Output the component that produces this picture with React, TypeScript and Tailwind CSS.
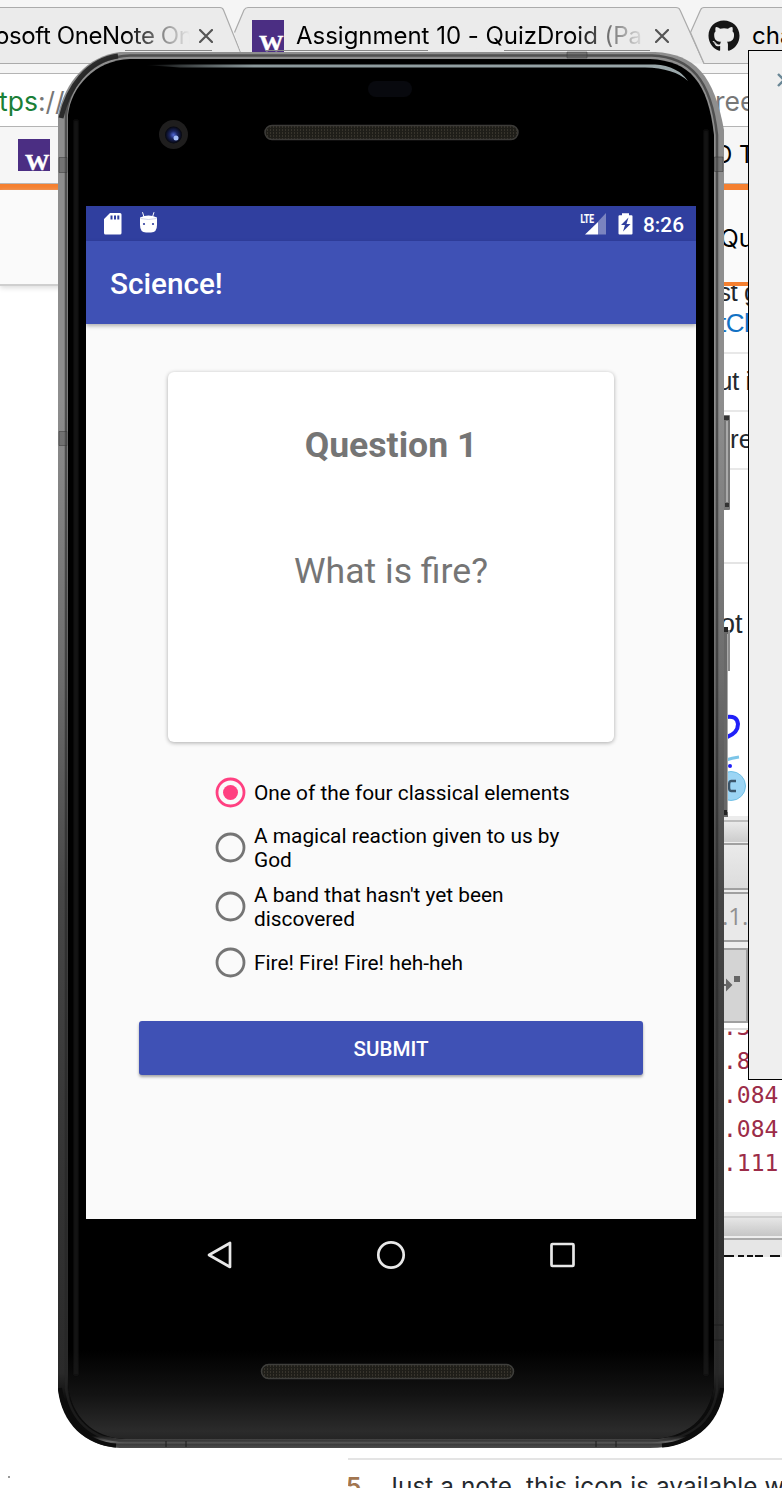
import React from "react";
import { FaGithub } from "react-icons/fa";

function Favicon() {
  return (
    <svg width="32" height="32" viewBox="0 0 32 32" className="shrink-0">
      <rect width="32" height="32" fill="#4b2e83" />
      <text x="7" y="31" fill="#fff" stroke="#fff" strokeWidth="0.4" fontFamily="Liberation Serif, serif" fontWeight="700" fontSize="24" textLength="24.5" lengthAdjust="spacingAndGlyphs">W</text>
    </svg>
  );
}

function Close() {
  return (
    <svg width="14" height="14" viewBox="0 0 14 14" className="shrink-0">
      <path d="M1 1L13 13M13 1L1 13" stroke="#555" strokeWidth="2.2" strokeLinecap="round" />
    </svg>
  );
}

function TabStrip() {
  return (
    <div className="relative h-[64px] bg-[#f5f5f5]">
      <svg className="absolute inset-0" width="782" height="64" viewBox="0 0 782 64" fill="#ebebeb" stroke="#ababab" strokeWidth="1.2">
        <path d="M-5 63.5V7.500H220Q222.500 7.500 223.500 10L245 63.500Z" />
        <path d="M245 63.500L234 32.500L244 10Q245.500 7.500 248 7.500H676Q679 7.500 680 10L704 63.500Z" stroke="none" />
        <path d="M234.500 32.500L244 10Q245.500 7.500 248 7.500H676Q679 7.500 680 10L704 63.500" />
        <path d="M790 63.500V7.500H704Q701.500 7.500 700.500 10L690.500 32.500L704 63.500Z" />
      </svg>
      <div className="relative flex h-[64px] items-center pt-[8px]">
        <div className="w-[190px] shrink-0 overflow-hidden whitespace-nowrap text-[24px] tracking-[-0.4px] [mask-image:linear-gradient(to_right,black_66%,transparent_100%)]">
          <span className="ml-[-5px]">osoft OneNote On</span>
        </div>
        <div className="ml-[9px]"><Close /></div>
        <div className="ml-[39px]"><Favicon /></div>
        <div className="ml-[12px] w-[347px] shrink-0 overflow-hidden whitespace-nowrap text-[24px] tracking-[-0.02px] [mask-image:linear-gradient(to_right,black_80%,transparent_101%)]">Assignment 10 - QuizDroid (Pa</div>
        <div className="ml-[12px]"><Close /></div>
        <FaGithub className="ml-[39px] shrink-0" size={32} color="#161616" />
        <div className="ml-[12px] whitespace-nowrap text-[24px]">cha</div>
      </div>
    </div>
  );
}

function Log({ children }: { children: string }) {
  return <div className="h-[34px] pl-[3px] font-['DejaVu_Sans_Mono',monospace] text-[23px] leading-[34px] text-[#9c2c48]">{children}</div>;
}

function SideColumn() {
  return (
    <div className="w-[62px] shrink-0 overflow-hidden text-[24.5px] text-[#24292e]">
      <div className="flex h-[92px] items-center bg-[#fafafa] pt-[5px] text-black">Qu</div>
      <div className="h-[4px] bg-[#f58030]" />
      <div className="h-[68px] overflow-hidden border-b-2 border-[#e8e8e8] font-['Liberation_Sans',sans-serif] text-[26px] tracking-[-0.5px] whitespace-nowrap">
        <div className="mt-[-9px] ml-[-2px] h-[31px] leading-[31px]">st g</div>
        <div className="ml-[-1px] h-[31px] leading-[31px] text-[#1372c4]">tCl</div>
      </div>
      <div className="h-[58px] border-b-2 border-[#e8e8e8] font-['Liberation_Sans',sans-serif] text-[26px] leading-[55px] tracking-[-0.5px]"><span className="ml-[-2px]">ut i</span></div>
      <div className="h-[58px] border-b-2 border-[#e8e8e8] pl-[10px] font-['Liberation_Sans',sans-serif] text-[26px] leading-[55px]">ree</div>
      <div className="h-[94px] border-b-2 border-[#e4e4e4]" />
      <div className="h-[120px] font-['Liberation_Sans',sans-serif] text-[27px] leading-[120px]">ot</div>
      <svg width="62" height="132" viewBox="0 0 62 132" className="block">
        <path d="M6 33Q17 31 18 40Q18 49 7 53" fill="none" stroke="#2020f8" strokeWidth="4" />
        <path d="M6 76Q12 74 19 73" fill="none" stroke="#7cc5e8" strokeWidth="3" />
        <circle cx="10" cy="82" r="2" fill="#2020f8" />
        <circle cx="11" cy="102" r="14.500" fill="#9cd5f5" stroke="#70c0e6" />
        <path d="M16 97H11Q9 97 9 102Q9 107 11 107H16" fill="none" stroke="#3b566b" strokeWidth="2.500" />
      </svg>
      <div className="h-[6px] border-b-2 border-[#bdbdbd] bg-[#ececec]" />
      <div className="h-[20px] bg-linear-to-b from-[#eaeaea] to-[#cccccc]" />
      <div className="h-[3px] border-b-2 border-[#a0a0a0] bg-[#eee]" />
      <div className="h-[43px] bg-linear-to-b from-[#eaeaea] to-[#dcdcdc]" />
      <div className="h-[6px] border-y-2 border-[#a0a0a0] bg-[#eee]" />
      <div className="h-[46px] bg-[#e9e9e9] pl-[2px] font-['Open_Sans',sans-serif] text-[24px] leading-[44px] text-[#909090]">.1.</div>
      <div className="h-[10px] border-y-2 border-[#a0a0a0] bg-[#eee]" />
      <div className="h-[73px] w-[28px] border-r-2 border-b-2 border-[#a0a0a0] bg-[#d4d4d4]">
        <svg width="24" height="70" viewBox="0 0 24 70">
          <path d="M4 35H8M7 31L11 35L7 39Z" stroke="#666" strokeWidth="2" fill="#666" />
          <rect x="14" y="26" width="6" height="6" fill="#666" />
        </svg>
      </div>
      <div className="h-[7px] border-b-2 border-[#ddd]" />
      <div className="h-[182px] overflow-hidden">
        <div className="mt-[-20px]">
          <Log>.344</Log>
          <Log>.844</Log>
          <Log>.084</Log>
          <Log>.084</Log>
          <Log>.111</Log>
        </div>
      </div>
      <div className="h-[6px] border-b-2 border-[#d0d0d0] bg-[#ebebeb]" />
      <div className="h-[18px] bg-linear-to-b from-[#e6e6e6] to-[#c6c6c6]" />
      <div className="h-[4px] border-b-2 border-[#aaa] bg-[#eee]" />
      <div className="h-[17px] bg-[#e6e6e6] pt-[15px]">
        <svg width="62" height="2" className="block"><path d="M4 1H14M18 1H24M27 1H33M35 1H43M50 1H60" stroke="#111" strokeWidth="2" /></svg>
      </div>
    </div>
  );
}

function Browser() {
  return (
    <div className="flex h-full flex-col">
      <TabStrip />
      <div className="h-[9px] bg-[#f5f5f5]" />
      <div className="flex h-[54px] items-center justify-between border-y border-[#b4b4b4] bg-white pt-[4px] text-[26.5px] text-[#777]">
        <div className="ml-[-1px]"><span className="text-[#1a7f37]">tps</span>://</div>
        <div className="w-[67px] overflow-hidden whitespace-nowrap">reen</div>
      </div>
      <div className="flex h-[57px] items-center justify-between border-b border-[#b8b8b8] bg-[#f6f6f6] pl-[18px]">
        <Favicon />
        <div className="w-[67px] text-[24px] whitespace-nowrap">D T</div>
      </div>
      <div className="h-[6px] bg-[#f58030]" />
      <div className="flex h-[1067px] justify-between">
        <div className="h-[96px] w-[400px] border-b-2 border-[#cfcfcf] bg-[#fafafa] shadow-[0_2px_5px_#ddd]" />
        <SideColumn />
      </div>
      <div className="mt-[201px] ml-[348px] flex h-[30px] overflow-hidden border-t-2 border-[#e4e4e4] pt-[10px] text-[24.3px] leading-[32px] whitespace-nowrap text-[#24292e]">
        <div className="ml-[-2px] w-[43px] shrink-0 font-semibold text-[#a27650]">5</div>
        <div className="ml-[-5px] tracking-[0.08px]">Just a note, this icon is available w</div>
      </div>
    </div>
  );
}

function Bezel() {
  return (
    <svg className="absolute inset-0" width="674" height="1400" viewBox="58 50 674 1400">
      <defs>
        <linearGradient id="rim" x1="0" y1="50" x2="0" y2="1450" gradientUnits="userSpaceOnUse">
          <stop offset="0" stopColor="#8e8e8e" /><stop offset=".25" stopColor="#8e8e8e" /><stop offset=".45" stopColor="#6c6c6c" /><stop offset=".6" stopColor="#474747" /><stop offset=".8" stopColor="#343434" /><stop offset=".945" stopColor="#2a2a2a" /><stop offset=".965" stopColor="#0b0b0b" /><stop offset=".99" stopColor="#0d0d0d" /><stop offset=".994" stopColor="#6c6c6c" /><stop offset=".996" stopColor="#3c3c3c" /><stop offset="1" stopColor="#555" />
        </linearGradient>
        <linearGradient id="chin" x1="0" y1="1350" x2="0" y2="1440" gradientUnits="userSpaceOnUse">
          <stop offset="0" stopColor="#000" /><stop offset=".5" stopColor="#131313" /><stop offset=".9" stopColor="#2b2b2b" /><stop offset="1" stopColor="#242424" />
        </linearGradient>
        <linearGradient id="shine" x1="145" y1="0" x2="690" y2="0" gradientUnits="userSpaceOnUse">
          <stop offset="0" stopColor="#aebcc0" stopOpacity="0" /><stop offset=".2" stopColor="#8a979a" /><stop offset="1" stopColor="#9ba8ab" />
        </linearGradient>
        <radialGradient id="lens"><stop offset="0" stopColor="#5269d8" /><stop offset=".45" stopColor="#1b2560" /><stop offset="1" stopColor="#05060c" /></radialGradient>
        <pattern id="mesh" width="3" height="3" patternUnits="userSpaceOnUse"><rect width="3" height="3" fill="#1f1e19" /><rect width="1" height="2" fill="#37342c" /></pattern>
        <filter id="soft" x="56" y="100" width="670" height="1300" filterUnits="userSpaceOnUse"><feGaussianBlur stdDeviation="1.800" /></filter>
      </defs>
      <rect x="723" y="415" width="7" height="95" rx="1" fill="#777" />
      <path d="M727 421V502" stroke="#aaa" strokeWidth="2" />
      <rect x="724" y="416" width="5" height="4" fill="#333" /><rect x="725" y="503" width="4" height="4" fill="#333" />
      <rect x="723" y="627" width="5" height="190" fill="#686868" />
      <path d="M727.500 634V812" stroke="#aaa" />
      <rect x="728" y="630" width="2" height="41" fill="#8b8b8b" />
      <rect x="723" y="627" width="5" height="5" fill="#222" /><rect x="723" y="810" width="4" height="5" fill="#222" />
      <path d="M120 52H655C695 54 714 75 724 130V1390C719 1426 692 1448 650 1448H120C84 1446 62 1423 58 1390V115C65 82 87 56 120 52Z" fill="url(#rim)" />
      <path d="M61 118C68 87 88 60 118 56" fill="none" stroke="#2c2c2c" strokeWidth="5" />
      <path d="M60 1388C64 1420 85 1443 116 1445.500M722 1388C718 1421 692 1443 662 1445.500" fill="none" stroke="#0c0c0c" strokeWidth="4" />
      <path d="M125 50.500H212M265 50.500H428M504 50.500H650" stroke="#888" strokeWidth="1" />
      <path d="M130 55.500H652C690 57 711 79 717 135V1390C713 1421 690 1441 650 1441H125C91 1440 70 1419 66 1388V115C69 84 93 57 130 55.500Z" fill="none" stroke="#262626" strokeOpacity=".6" strokeWidth="2.500" />
      <path d="M130 59H650C690 61 708 82 714 135V1385C710 1418 686 1439 650 1439H125C93 1438 71 1416 68 1385V115C71 87 95 60 130 59Z" fill="#000" />
      <path d="M68 1350H714V1385C710 1418 686 1439 650 1439H125C93 1438 71 1416 68 1385Z" fill="url(#chin)" />
      <path d="M76 120V1375M706 130V1375" stroke="#1e1e1e" strokeWidth="3" filter="url(#soft)" />
      <path d="M145 65L180 64.500H655Q678 66 688 81Q674 68 645 67.500H180Z" fill="url(#shine)" />
      <g fill="#555" fillOpacity=".45" stroke="#333" strokeOpacity=".6" strokeWidth=".8">
        <path d="M59 157.500H67V172.500H59ZM59 431.500H67V445.500H59ZM714.500 157H723V171.500H714.500ZM567 52V58H587V52Z" />
      </g>
      <path d="M714 1325H723M714 1340H723M166 1441V1447M186 1441V1447M596 1441V1447M616 1441V1447" stroke="#1c1c1c" />
      <rect x="368" y="81" width="44" height="16" rx="8" fill="#08090e" />
      <circle cx="173.500" cy="134.500" r="14.500" fill="#1f1e1e" /><circle cx="173.500" cy="135" r="8.500" fill="url(#lens)" /><circle cx="176" cy="138" r="2.500" fill="#a4bdf8" />
      <rect x="265" y="125.500" width="253" height="14" rx="7" fill="url(#mesh)" stroke="#3c3b38" strokeWidth="1.500" />
      <rect x="261.500" y="1364.500" width="252" height="14" rx="7" fill="url(#mesh)" stroke="#3f3f3c" strokeWidth="1.500" />
    </svg>
  );
}

function StatusBar() {
  return (
    <div className="flex h-[35px] items-center bg-[#303f9f] pr-[12px] pl-[18px] text-white">
      <svg width="18" height="22" viewBox="0 0 18 22"><path fillRule="evenodd" d="M6 0H16Q17.500 0 17.500 1.500V20Q17.500 21.500 16 21.500H1.500Q0 21.500 0 20V6ZM6.500 2.500V6.500H8.500V2.500ZM10 2.500V6.500H12V2.500ZM13.300 2.500V6.500H15.300V2.500Z" fill="#fff" /></svg>
      <svg width="19" height="22" viewBox="0 0 19 22" className="ml-[17px] overflow-visible">
        <path d="M5 4L3.500 -.8M13.500 4L15 -.8" stroke="#fff" strokeWidth="1" />
        <path d="M1 4.500Q9.500 .5 18 4.500V12Q18 19.500 12 19.500H7Q1 19.500 1 12Z" fill="#fff" />
        <path d="M1.500 5.500Q9.500 7.500 17.500 5.500" stroke="#bac0df" strokeWidth=".7" fill="none" />
        <circle cx="5" cy="11" r="1.100" fill="#303f9f" /><circle cx="14" cy="11" r="1.100" fill="#303f9f" />
      </svg>
      <svg width="27" height="22" viewBox="0 0 27 22" className="ml-auto">
        <path d="M26 0V21.500H18V8.500Z" fill="#7b84c0" /><path d="M5 21.500L18 9V21.500Z" fill="#fff" />
        <text x="0.500" y="9.500" fill="#fff" stroke="#fff" strokeWidth=".2" fontFamily="Roboto, sans-serif" fontWeight="700" fontSize="12.500" textLength="13.500" lengthAdjust="spacingAndGlyphs">LTE</text>
      </svg>
      <svg width="15" height="22" viewBox="0 0 15 22" className="ml-[11px]"><path fillRule="evenodd" d="M4 .3H11V2.300H13.500Q14.500 2.300 14.500 3.300V20.500Q14.500 21.500 13.500 21.500H1.500Q.5 21.500 .5 20.500V3.300Q.5 2.300 1.500 2.300H4ZM10.500 4.500L3 12H7L5 18.500L12.500 11H8.500Z" fill="#fff" /></svg>
      <span className="ml-[10px] pt-[3px] text-[20.8px] leading-none font-medium">8:26</span>
    </div>
  );
}

const answers = [
  { text: "One of the four classical elements", row: "h-[48px]", dot: "", on: true },
  { text: "A magical reaction given to us by God", row: "h-[61px]", dot: "mt-[2px]", on: false },
  { text: "A band that hasn't yet been discovered", row: "h-[57px]", dot: "mt-[2px]", on: false },
  { text: "Fire! Fire! Fire! heh-heh", row: "h-[55px]", dot: "mt-[1px]", on: false },
];

function QuizScreen() {
  return (
    <div className="flex h-[1013px] w-[610px] flex-col bg-[#fafafa]">
      <StatusBar />
      <div className="flex h-[83px] shrink-0 items-center bg-[#3f51b5] pt-[4px] pl-[24px] text-[29.7px] font-medium text-white shadow-[0_2px_4px_rgba(0,0,0,.3)]">Science!</div>
      <div className="mt-[48px] ml-[82px] flex h-[370px] w-[446px] flex-col items-center rounded-[6px] bg-white pt-[49px] text-[35.6px] leading-[48px] text-[#757575] shadow-[0_1px_4px_rgba(0,0,0,.32)]">
        <div className="font-bold">Question 1</div>
        <div className="mt-[78px]">What is fire?</div>
      </div>
      <div className="mt-[26px] ml-[129px]">
        {answers.map((a) => (
          <div key={a.text} className={"flex items-center " + a.row}>
            <svg width="31" height="31" viewBox="0 0 31 31" className={"shrink-0 " + a.dot}>
              <circle cx="15.500" cy="15.500" r="13.500" fill="none" stroke={a.on ? "#ff4081" : "#757575"} strokeWidth="2.800" />
              {a.on && <circle cx="15.500" cy="15.500" r="7.500" fill="#ff4081" />}
            </svg>
            <div className="ml-[8px] w-[330px] pt-[2px] text-[20.85px] leading-[24px] text-black">{a.text}</div>
          </div>
        ))}
      </div>
      <button className="mt-[32px] ml-[53px] h-[54px] w-[504px] rounded-[3px] bg-[#3f51b5] pt-[3px] text-[20.6px] font-medium text-white shadow-[0_2px_3px_rgba(0,0,0,.35)]">SUBMIT</button>
    </div>
  );
}

function Phone() {
  return (
    <div className="absolute top-[50px] left-[58px] h-[1400px] w-[674px] font-['Roboto',sans-serif]">
      <Bezel />
      <div className="relative flex flex-col pt-[156px] pl-[28px]">
        <QuizScreen />
        <div className="flex h-[71px] w-[610px] items-center justify-between pr-[120px] pl-[120px]">
          <svg width="28" height="30" viewBox="0 0 28 30"><path d="M24 3V27L3 15Z" fill="none" stroke="#e8e8e8" strokeWidth="2.700" strokeLinejoin="round" /></svg>
          <svg width="30" height="30" viewBox="0 0 30 30"><circle cx="15" cy="15" r="12.700" fill="none" stroke="#e8e8e8" strokeWidth="2.700" /></svg>
          <svg width="28" height="30" viewBox="0 0 28 30"><rect x="3.500" y="4" width="22" height="22" rx="1" fill="none" stroke="#e8e8e8" strokeWidth="2.700" /></svg>
        </div>
      </div>
    </div>
  );
}

export default function App() {
  return (
    <div className="relative h-[1488px] w-[782px] overflow-hidden bg-white font-['Inter',sans-serif] text-black">
      <Browser />
      <Phone />
      <div className="absolute top-[50px] left-[748px] h-[1030px] w-[40px] border border-black bg-[#efefef] pt-[22px] pl-[28px]">
        <svg width="14" height="14" viewBox="0 0 14 14"><path d="M1 1L13 13M13 1L1 13" stroke="#6a8796" strokeWidth="2.400" /></svg>
      </div>
      <div className="absolute top-[1476px] left-[8px] h-[2px] w-[2px] bg-[#999]" />
    </div>
  );
}
